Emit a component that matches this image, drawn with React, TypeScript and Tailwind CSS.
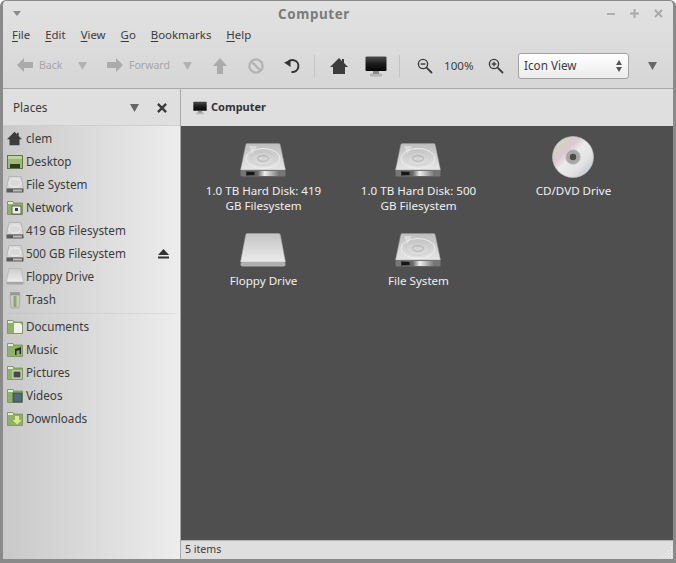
import React from 'react';

const font = "font-['Noto_Sans','Open_Sans',sans-serif]";

const Tri = ({ className = '' }: { className?: string }) => (
  <svg viewBox="0 0 10 9" preserveAspectRatio="none" className={className}>
    <path d="M0 0H10L5 9Z" fill="currentColor" />
  </svg>
);

const Arrow = ({ dir }: { dir: 'left' | 'right' | 'up' }) => {
  const d = { left: 'M0 7L7 0V4H16V10H7V14Z', right: 'M16 7L9 0V4H0V10H9V14Z', up: 'M8 0L15 8H11V16H5V8H1Z' }[dir];
  return (
    <svg width="16" height="16" viewBox="0 0 16 16">
      <path d={d} fill="#ababab" />
    </svg>
  );
};

const HomeIcon = ({ size = 18 }: { size?: number }) => (
  <svg width={size} height={size} viewBox="0 0 18 18">
    <path d="M9 1L0 10H3V17H15V10H18L14 6V2H12V4Z" fill="#3c3c3c" />
  </svg>
);

const Monitor = ({ w = 22, h = 21 }: { w?: number; h?: number }) => (
  <svg width={w} height={h} viewBox="0 0 22 21">
    <defs>
      <linearGradient id="screen" x1="0" y1="0" x2="0" y2="1">
        <stop offset="0" stopColor="#4d4d4d" />
        <stop offset="0.5" stopColor="#1c1c1c" />
        <stop offset="1" stopColor="#050505" />
      </linearGradient>
    </defs>
    <rect x="0.5" y="0.5" width="21" height="14.5" rx="1" fill="url(#screen)" />
    <rect x="8" y="15" width="6" height="3" fill="#8a8a8a" />
    <rect x="5.5" y="18" width="11" height="2" rx="1" fill="#c4c4c4" stroke="#8c8c8c" strokeWidth="0.5" />
  </svg>
);

const Magnifier = ({ plus }: { plus?: boolean }) => (
  <svg width="16" height="16" viewBox="0 0 16 16" fill="none" stroke="#3e3e3e">
    <circle cx="6" cy="6" r="4.6" strokeWidth="1.4" />
    <path d="M3.7 6H8.3" strokeWidth="1.4" />
    {plus && <path d="M6 3.7V8.3" strokeWidth="1.4" />}
    <path d="M9.6 9.6L14.5 14.5" strokeWidth="1.8" strokeLinecap="round" />
  </svg>
);

const HardDrive = ({ id }: { id: string }) => (
  <svg width="46" height="35" viewBox="0 0 46 35">
    <defs>
      <linearGradient id={`top${id}`} x1="0" y1="0" x2="0" y2="1">
        <stop offset="0" stopColor="#bdbdbd" />
        <stop offset="1" stopColor="#e6e6e6" />
      </linearGradient>
      <linearGradient id={`front${id}`} x1="0" y1="0" x2="1" y2="0">
        <stop offset="0" stopColor="#454545" />
        <stop offset="0.35" stopColor="#6a6a6a" />
        <stop offset="0.55" stopColor="#eeeeee" />
        <stop offset="1" stopColor="#6e6e6e" />
      </linearGradient>
    </defs>
    <path d="M7 0.5H39Q40 0.5 40.3 2L45.5 27H0.5L5.7 2Q6 0.5 7 0.5Z" fill={`url(#top${id})`} stroke="#969696" strokeWidth="0.5" />
    <ellipse cx="23" cy="15.5" rx="17" ry="10" fill="none" stroke="#f0f0f0" strokeWidth="0.9" />
    <ellipse cx="23" cy="15.5" rx="12" ry="7" fill="none" stroke="#c2c2c2" strokeWidth="0.5" />
    <ellipse cx="23" cy="15.5" rx="5.5" ry="2.8" fill="none" stroke="#a8a8a8" strokeWidth="0.8" />
    <path d="M9 3L17 3L12 11Z" fill="#eeeeee" opacity="0.5" />
    <rect x="0.5" y="27" width="45" height="6.5" rx="1" fill="#767676" />
    <rect x="6" y="28" width="34" height="5" fill={`url(#front${id})`} />
    <rect x="6.5" y="29" width="8" height="3" fill="#161616" />
  </svg>
);

const FloppyDrive = ({ id }: { id: string }) => (
  <svg width="46" height="35" viewBox="0 0 46 35">
    <defs>
      <linearGradient id={`ftop${id}`} x1="0" y1="0" x2="0" y2="1">
        <stop offset="0" stopColor="#c4c4c4" />
        <stop offset="1" stopColor="#ebebeb" />
      </linearGradient>
    </defs>
    <path d="M7 0.5H39Q40 0.5 40.3 2L45.5 29H0.5L5.7 2Q6 0.5 7 0.5Z" fill={`url(#ftop${id})`} stroke="#a8a8a8" strokeWidth="0.5" />
    <rect x="0.5" y="29" width="45" height="4.5" rx="2" fill="#b0b0b0" />
  </svg>
);

const SmallDrive = () => (
  <svg width="18" height="17" viewBox="0 0 18 17" className="shrink-0">
    <path d="M3 0.5H15L17.5 12.5H0.5Z" fill="#d9d9d9" stroke="#9a9a9a" strokeWidth="0.5" />
    <ellipse cx="9" cy="7" rx="6" ry="4" fill="none" stroke="#f4f4f4" strokeWidth="0.8" />
    <rect x="0.5" y="12.5" width="17" height="4" rx="0.5" fill="#5a5a5a" />
    <rect x="7" y="13.5" width="9" height="2" fill="#bcbcbc" />
  </svg>
);

const SmallFloppy = () => (
  <svg width="18" height="17" viewBox="0 0 18 17" className="shrink-0">
    <defs>
      <linearGradient id="sfl" x1="0" y1="0" x2="0" y2="1">
        <stop offset="0" stopColor="#cdcdcd" />
        <stop offset="1" stopColor="#ededed" />
      </linearGradient>
    </defs>
    <path d="M3 0.5H15L17.5 14H0.5Z" fill="url(#sfl)" stroke="#ababab" strokeWidth="0.5" />
    <rect x="0.5" y="14" width="17" height="2.5" rx="1" fill="#a6a6a6" />
  </svg>
);

const Cd = () => (
  <svg width="42" height="42" viewBox="0 0 42 42">
    <defs>
      <linearGradient id="cd" x1="0" y1="0" x2="1" y2="1">
        <stop offset="0" stopColor="#ececec" />
        <stop offset="0.2" stopColor="#d2cfc4" />
        <stop offset="0.34" stopColor="#dcc8d2" />
        <stop offset="0.48" stopColor="#ececec" />
        <stop offset="0.7" stopColor="#e2e2e2" />
        <stop offset="0.82" stopColor="#cad3da" />
        <stop offset="1" stopColor="#d4d4d4" />
      </linearGradient>
    </defs>
    <circle cx="21" cy="21" r="20.5" fill="url(#cd)" stroke="#c4c4c4" strokeWidth="0.6" />
    <circle cx="21" cy="21" r="7.5" fill="#a6a6a6" stroke="#cfcfcf" strokeWidth="1" />
    <circle cx="21" cy="21" r="3.2" fill="#4a4a4a" />
  </svg>
);

const TrashIcon = () => (
  <svg width="14" height="18" viewBox="0 0 14 18" className="shrink-0">
    <rect x="2" y="1" width="10" height="3" rx="1" fill="#9b9b9b" />
    <path d="M2 4H12L11 17H3Z" fill="#c9ccc4" stroke="#929292" strokeWidth="0.6" />
    <rect x="5.5" y="5" width="3" height="11" fill="#8aa968" />
  </svg>
);

const DesktopIcon = () => (
  <svg width="16" height="14" viewBox="0 0 16 14" className="shrink-0">
    <rect x="0.5" y="0.5" width="15" height="13" fill="#9cbb78" stroke="#5c7741" />
    <rect x="1" y="1" width="14" height="3" fill="#bcd29f" />
    <rect x="3" y="9" width="10" height="4" fill="#2e3d20" />
  </svg>
);

type Glyph = 'network' | 'music' | 'pictures' | 'videos' | 'downloads' | 'documents';

const Folder = ({ glyph }: { glyph: Glyph }) => (
  <svg width="16" height="15" viewBox="0 0 16 15" className="shrink-0">
    <path d="M0.5 1.5H6L7 3H15.5V14.5H0.5Z" fill="#8bab63" stroke="#66834a" strokeWidth="0.6" />
    <rect x="1" y="2" width="5" height="2" fill="#e4ecd8" />
    <rect x="1" y="4" width="14" height="10" fill="#8fb266" />
    {glyph === 'network' && <rect x="5" y="6" width="9" height="8" fill="#ecefe6" stroke="#4b4b4b" strokeWidth="0.8" />}
    {glyph === 'network' && <rect x="8" y="8" width="3" height="3" fill="#3f3f3f" />}
    {glyph === 'documents' && <path d="M7 4H13L15 6V14H7Z" fill="#f1f1ea" />}
    {glyph === 'music' && <path d="M8 7L14 5V12H12.5V8L9.5 9V13H8Z" fill="#2c2c2c" />}
    {glyph === 'pictures' && <rect x="6" y="6" width="8" height="7" fill="#474747" stroke="#e5e5e5" />}
    {glyph === 'videos' && <rect x="6" y="5" width="9" height="9" fill="#4f6b7a" stroke="#2f3f49" strokeWidth="0.7" />}
    {glyph === 'downloads' && <path d="M8 5H12V9H14.5L10 13.5L5.5 9H8Z" fill="#dce98a" />}
  </svg>
);

const Row = ({ icon, label, eject }: { icon: React.ReactNode; label: string; eject?: boolean }) => (
  <div className="flex h-[23px] items-center pl-[3px] pr-[11px] text-[11.7px] text-[#3b3b3b]">
    <div className="flex w-[17px] items-center justify-center">{icon}</div>
    <span className="ml-[3px]">{label}</span>
    {eject && (
      <svg width="11" height="10" viewBox="0 0 11 10" className="ml-auto">
        <path d="M5.5 0L11 6H0Z" fill="#333333" />
        <rect y="7.5" width="11" height="2" fill="#333333" />
      </svg>
    )}
  </div>
);

const Item = ({ icon, lines }: { icon: React.ReactNode; lines: string[] }) => (
  <div className="flex flex-col items-center">
    <div className="mr-[2px] flex h-[39px] items-end">{icon}</div>
    <div className="mt-[5px] text-center text-[11.6px] leading-[15px] text-[#efefef]">
      {lines.map((l) => (
        <div key={l}>{l}</div>
      ))}
    </div>
  </div>
);

const Menu = ({ label }: { label: string }) => (
  <span>
    <span className="underline underline-offset-2">{label[0]}</span>
    {label.slice(1)}
  </span>
);

export default function App() {
  return (
    <div className={`${font} flex h-[563px] w-[676px] flex-col overflow-hidden rounded-t-md border-x-[3px] border-b-[4px] border-t border-[#8a8a8a] bg-[#dcdcdc] text-[#3b3b3b]`}>
      {/* Header */}
      <div className="h-[88px] shrink-0 border-b border-[#a9a9a9] bg-gradient-to-b from-[#e2e2e2] to-[#d6d6d6]">
        <div className="flex h-[25px] items-center px-[10px]">
          <Tri className="h-[5px] w-[8px] text-[#8a8a8a]" />
          <div className="flex-1 pt-[1px] text-center text-[13.4px] font-bold tracking-[0.6px] text-[#7b7b7b]">Computer</div>
          <div className="flex w-[56px] items-center justify-between">
            <span className="h-[2px] w-[8px] bg-[#b0b0b0]" />
            <svg width="9" height="9" viewBox="0 0 9 9"><path d="M4.5 0V9M0 4.5H9" stroke="#a9a9a9" strokeWidth="2" /></svg>
            <svg width="9" height="9" viewBox="0 0 9 9"><path d="M1 1L8 8M8 1L1 8" stroke="#a9a9a9" strokeWidth="2" /></svg>
          </div>
        </div>
        <div className="flex h-[18px] items-center gap-[15px] pl-[9px] text-[11.4px] text-[#3b3b3b]">
          <Menu label="File" />
          <Menu label="Edit" />
          <Menu label="View" />
          <Menu label="Go" />
          <Menu label="Bookmarks" />
          <Menu label="Help" />
        </div>
        <div className="flex h-[44px] items-center pl-[14px] text-[10.5px] text-[#a6a6a6]">
          <Arrow dir="left" />
          <span className="ml-[6px] w-[23px]">Back</span>
          <Tri className="ml-[16px] h-[8px] w-[9px] text-[#b2b2b2]" />
          <div className="ml-[20px]"><Arrow dir="right" /></div>
          <span className="ml-[6px] w-[40px]">Forward</span>
          <Tri className="ml-[14px] h-[8px] w-[9px] text-[#b2b2b2]" />
          <div className="ml-[20px]"><Arrow dir="up" /></div>
          <svg width="16" height="16" viewBox="0 0 16 16" fill="none" stroke="#b4b4b4" strokeWidth="2.4" className="ml-[20px]">
            <circle cx="8" cy="8" r="6.6" />
            <path d="M3.5 3.5L12.5 12.5" />
          </svg>
          <svg width="16" height="16" viewBox="0 0 16 16" fill="none" className="ml-[20px]">
            <path d="M3 5.5A6 6 0 1 1 7.5 14" stroke="#333333" strokeWidth="2" />
            <path d="M0 4.5L6.5 2V9Z" fill="#333333" />
          </svg>
          <div className="ml-[14px] h-[22px] w-px bg-[#c4c4c4]" />
          <div className="ml-[15px]"><HomeIcon /></div>
          <div className="ml-[17px]"><Monitor /></div>
          <div className="ml-[12px] h-[22px] w-px bg-[#c4c4c4]" />
          <div className="ml-[17px]"><Magnifier /></div>
          <span className="ml-[11px] w-[32px] text-[11.6px] text-[#3b3b3b]">100%</span>
          <div className="ml-[12px]"><Magnifier plus /></div>
          <div className="ml-[14px] flex h-[26px] w-[111px] items-center justify-between rounded-[3px] border border-[#a2a2a2] bg-gradient-to-b from-[#ffffff] to-[#ececec] pl-[5px] pr-[6px] text-[11.7px] text-[#3b3b3b]">
            <span>Icon View</span>
            <span className="flex flex-col gap-[2px]">
              <Tri className="h-[5px] w-[6px] rotate-180 text-[#555555]" />
              <Tri className="h-[5px] w-[6px] text-[#555555]" />
            </span>
          </div>
          <Tri className="ml-[19px] h-[8px] w-[9px] text-[#666666]" />
        </div>
      </div>

      <div className="flex min-h-0 flex-1">
        {/* Sidebar */}
        <div className="flex w-[178px] shrink-0 flex-col border-r border-[#a9a9a9]">
          <div className="flex h-[37px] shrink-0 items-center border-b border-[#cfcfcf] bg-[#dfdfdf] pl-[10px] pr-[13px] pt-[1px] text-[11.7px]">
            <span>Places</span>
            <Tri className="ml-auto h-[8px] w-[9px] text-[#666666]" />
            <svg width="10" height="10" viewBox="0 0 11 11" className="ml-[18px]"><path d="M1 1L10 10M10 1L1 10" stroke="#3a3a3a" strokeWidth="2.6" /></svg>
          </div>
          <div className="flex-1 bg-gradient-to-r from-[#c9c9c9] to-[#ededed] pt-[1px]">
            <Row icon={<HomeIcon size={15} />} label="clem" />
            <Row icon={<DesktopIcon />} label="Desktop" />
            <Row icon={<SmallDrive />} label="File System" />
            <Row icon={<Folder glyph="network" />} label="Network" />
            <Row icon={<SmallDrive />} label="419 GB Filesystem" />
            <Row icon={<SmallDrive />} label="500 GB Filesystem" eject />
            <Row icon={<SmallFloppy />} label="Floppy Drive" />
            <Row icon={<TrashIcon />} label="Trash" />
            <div className="mx-[3px] mb-[1px] mt-[2px] h-px bg-gradient-to-r from-[#c4c4c4] to-[#dedede]" />
            <Row icon={<Folder glyph="documents" />} label="Documents" />
            <Row icon={<Folder glyph="music" />} label="Music" />
            <Row icon={<Folder glyph="pictures" />} label="Pictures" />
            <Row icon={<Folder glyph="videos" />} label="Videos" />
            <Row icon={<Folder glyph="downloads" />} label="Downloads" />
          </div>
        </div>

        {/* Main pane */}
        <div className="flex min-w-0 flex-1 flex-col">
          <div className="flex h-[37px] shrink-0 items-center gap-[4px] bg-[#dfdfdf] pl-[12px] text-[11px] font-bold text-[#2e3436]">
            <Monitor w={14} h={14} />
            <span>Computer</span>
          </div>
          <div className="grid flex-1 grid-cols-[155px_155px_155px] content-start gap-y-[16px] bg-[#4f4f4f] pl-[5px] pt-[13px]">
            <Item icon={<HardDrive id="1" />} lines={['1.0 TB Hard Disk: 419', 'GB Filesystem']} />
            <Item icon={<HardDrive id="2" />} lines={['1.0 TB Hard Disk: 500', 'GB Filesystem']} />
            <Item icon={<Cd />} lines={['CD/DVD Drive']} />
            <Item icon={<FloppyDrive id="3" />} lines={['Floppy Drive']} />
            <Item icon={<HardDrive id="4" />} lines={['File System']} />
          </div>
          <div className="relative flex h-[19px] shrink-0 items-center border-t border-[#b5b5b5] bg-[#dfdfdf] pl-[4px] text-[10.6px] text-[#3b3b3b]">
            5 items
            <svg width="14" height="14" viewBox="0 0 14 14" className="absolute bottom-0 right-0">
              <path d="M12 2h1v1h-1zM9 5h1v1H9zM12 5h1v1h-1zM6 8h1v1H6zM9 8h1v1H9zM12 8h1v1h-1zM3 11h1v1H3zM6 11h1v1H6zM9 11h1v1H9zM12 11h1v1h-1z" fill="#f4f4f4" />
            </svg>
          </div>
        </div>
      </div>
    </div>
  );
}
